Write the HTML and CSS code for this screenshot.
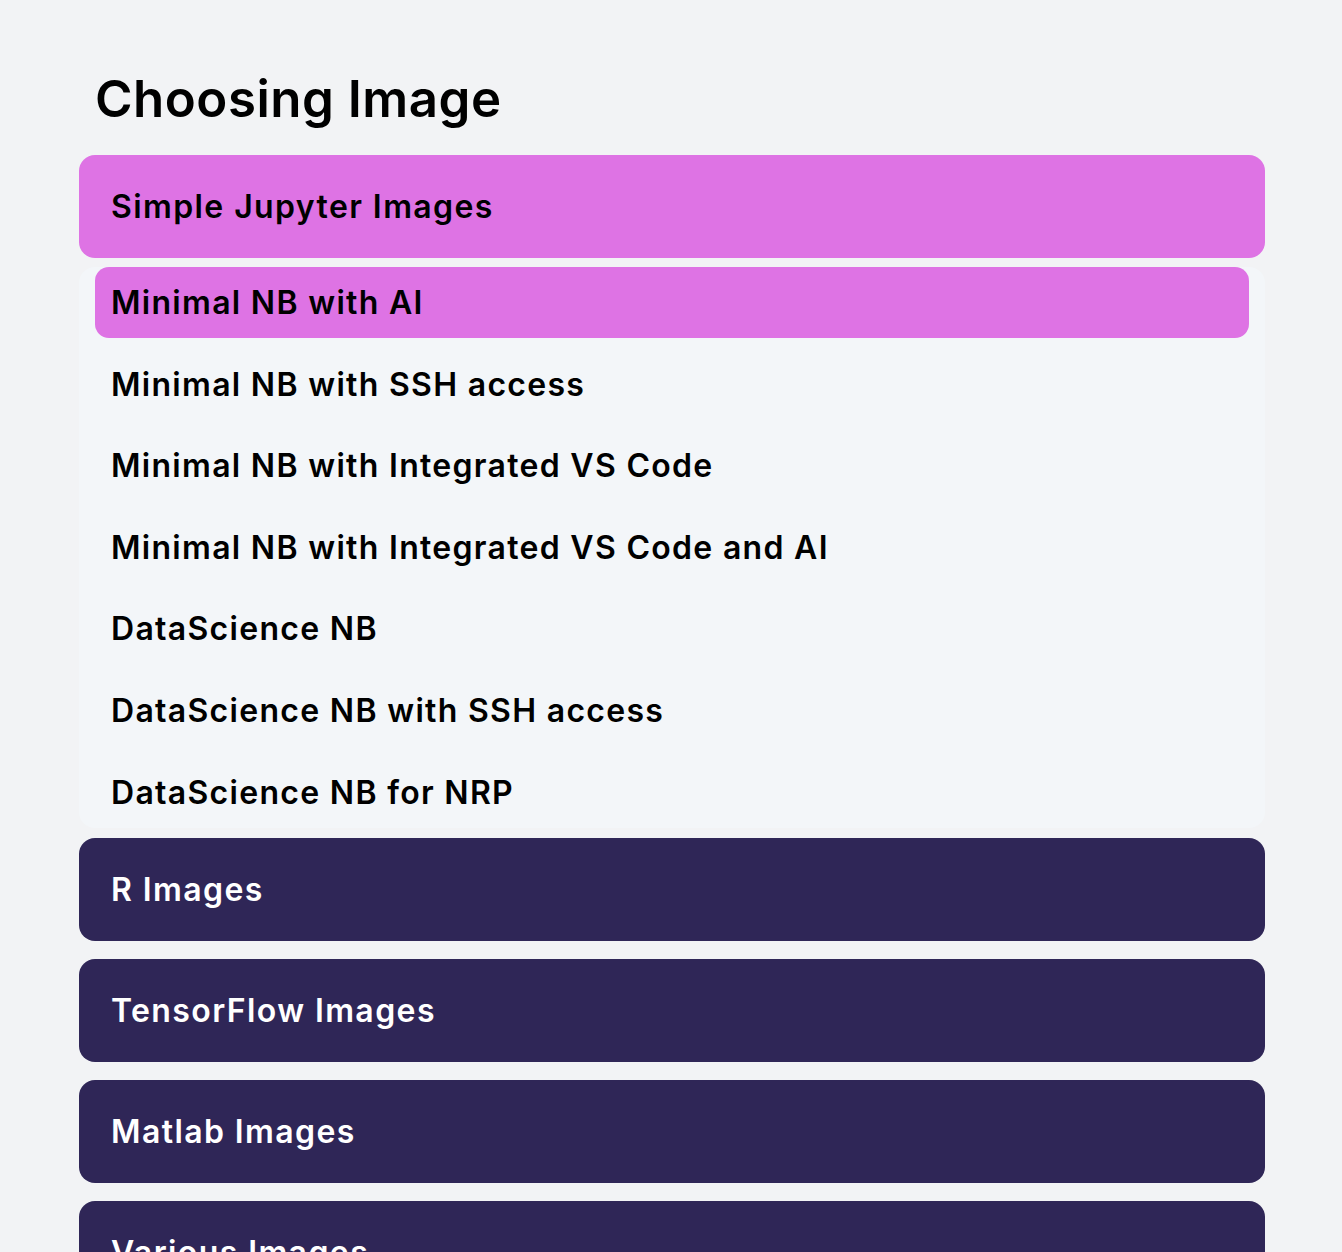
FILE: index.html
```html
<!DOCTYPE html>
<html lang="en">
<head>
<meta charset="utf-8">
<title>Choosing Image</title>
<link rel="stylesheet" href="styles.css">
</head>
<body>
<main class="page">
  <h1 class="title">Choosing Image</h1>
  <section class="group">
    <div class="category category-active">Simple Jupyter Images</div>
    <ul class="panel">
      <li class="item item-selected">Minimal NB with AI</li>
      <li class="item">Minimal NB with SSH access</li>
      <li class="item">Minimal NB with Integrated VS Code</li>
      <li class="item">Minimal NB with Integrated VS Code and AI</li>
      <li class="item">DataScience NB</li>
      <li class="item">DataScience NB with SSH access</li>
      <li class="item">DataScience NB for NRP</li>
    </ul>
  </section>
  <section class="group">
    <div class="category">R Images</div>
  </section>
  <section class="group">
    <div class="category">TensorFlow Images</div>
  </section>
  <section class="group">
    <div class="category">Matlab Images</div>
  </section>
  <section class="group">
    <div class="category">Various Images</div>
  </section>
</main>
</body>
</html>
```
FILE: styles.css
```css
html, body {
  margin: 0;
  padding: 0;
  background: #f2f3f5;
}
body {
  font-family: "Inter", "Noto Sans", sans-serif;
  color: #000;
}
.page {
  width: 1186px;
  margin: 0 0 0 79px;
  padding-top: 67px;
  display: flex;
  flex-direction: column;
  gap: 18px;
}
.title {
  margin: 0 0 6px 16px;
  font-size: 51px;
  font-weight: 600;
  line-height: 64px;
  letter-spacing: 0.5px;
}
.group {
  display: flex;
  flex-direction: column;
  gap: 9px;
}
.category {
  height: 103px;
  box-sizing: border-box;
  padding-left: 32px;
  border-radius: 16px;
  background: #2f2657;
  color: #fff;
  display: flex;
  align-items: center;
  font-size: 32px;
  font-weight: 600;
  letter-spacing: 1.4px;
}
.category-active {
  background: #de73e4;
  color: #000;
}
.panel {
  list-style: none;
  margin: 0 0 -7.5px;
  padding: 0 16px;
  background: #f3f6f9;
  border-radius: 16px;
  display: flex;
  flex-direction: column;
  gap: 10.6px;
}
.item {
  height: 71px;
  box-sizing: border-box;
  padding-left: 16px;
  border-radius: 14px;
  display: flex;
  align-items: center;
  font-size: 32px;
  font-weight: 600;
  letter-spacing: 1.3px;
}
.item-selected {
  background: #de73e4;
}
```
